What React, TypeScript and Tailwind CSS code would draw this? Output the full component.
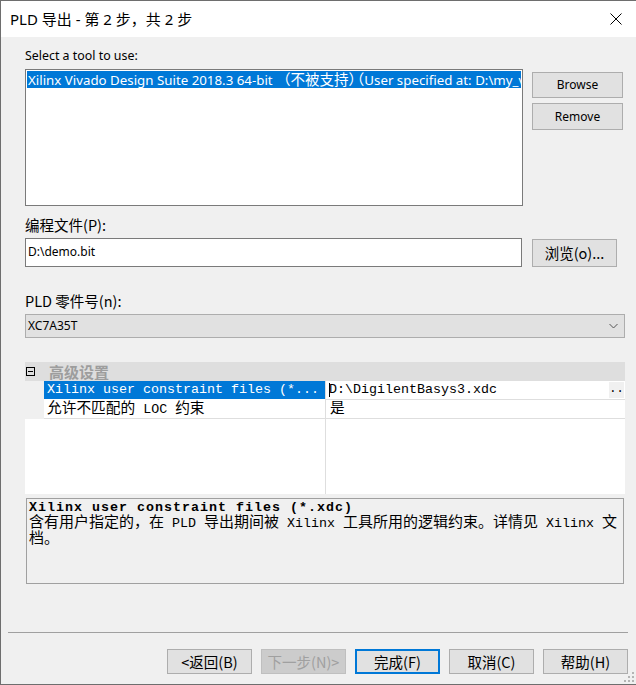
import React from "react";

const CJK_RUN = /([\u2E80-\u9FFF\u3000-\u303F\uFF00-\uFFEF]+)/;

// Renders a string, wrapping runs of CJK glyphs in a span with their own class.
function Runs({ text, cjk }: { text: string; cjk: string }) {
  const parts = text.split(CJK_RUN);
  return (
    <>
      {parts.map((p, i) =>
        i % 2 === 1 ? (
          <span key={i} className={cjk}>
            {p}
          </span>
        ) : (
          <React.Fragment key={i}>{p}</React.Fragment>
        )
      )}
    </>
  );
}

// Labels that contain Chinese are drawn in the larger linked CJK face.
function T({ text }: { text: string }) {
  return <span className="font-['Noto_Sans_CJK_SC',sans-serif] text-[14.5px]">{text}</span>;
}

function Btn({
  children,
  className = "",
}: {
  children: React.ReactNode;
  className?: string;
}) {
  return (
    <div
      className={`flex items-center justify-center border border-[#adadad] bg-[#e1e1e1] text-[12px] leading-[16px] whitespace-pre ${className}`}
    >
      {children}
    </div>
  );
}

function Grip() {
  const dots = [
    [8, 0],
    [4, 4],
    [8, 4],
    [0, 8],
    [4, 8],
    [8, 8],
  ];
  return (
    <svg width="11" height="11" viewBox="0 0 11 11" className="absolute right-[1px] bottom-[1px]">
      {dots.map(([x, y], i) => (
        <rect key={i} x={x} y={y} width="2" height="2" fill="#b4b4b4" />
      ))}
    </svg>
  );
}

export default function App() {
  return (
    <div className="relative w-[636px] h-[685px] box-border border-l border-t border-b border-[#6e6e6e] bg-[#f0f0f0] flex flex-col text-black font-['Noto_Sans','Noto_Sans_CJK_SC',sans-serif] text-[12px] leading-[16px]">
      {/* title bar */}
      <div className="h-[36px] shrink-0 bg-white flex items-center justify-between pl-[9px] pr-[14px]">
        <span className="text-[15px] leading-[20px]">PLD 导出 - 第 2 步，共 2 步</span>
        <svg width="12" height="12" viewBox="0 0 12 12">
          <path d="M0.5 0.5L11.5 11.5M11.5 0.5L0.5 11.5" stroke="#000" strokeWidth="1" />
        </svg>
      </div>

      {/* wizard body */}
      <div className="flex-1 flex flex-col pl-[24px] pr-[11px]">
        <div className="mt-[11px] h-[16px] text-[12.4px]">Select a tool to use:</div>
        <div className="mt-[5px] flex gap-[9px]">
          <div className="w-[498px] h-[137px] border border-[#7a7a7a] bg-white p-[1px] overflow-hidden">
            <div className="h-[17px] bg-[#0078d7] text-white whitespace-pre overflow-hidden pl-[1px] leading-[17px] text-[13.3px]">
              Xilinx Vivado Design Suite 2018.3 64-bit{" "}
              <span className="text-[14.5px]">（不被支持）</span>
              <span className="text-[14.5px] -ml-[6px]">（</span>
              User specified at: D:\my_vivado\Vivado\2018.3\bin\vivado.bat
              <span className="text-[14.5px]">）</span>
            </div>
          </div>
          <div className="flex flex-col gap-[5px] pt-[3px]">
            <Btn className="w-[91px] h-[26px]">Browse</Btn>
            <Btn className="w-[91px] h-[27px]">Remove</Btn>
          </div>
        </div>

        <div className="mt-[11px] h-[16px] leading-[16px]">
          <T text="编程文件(P):" />
        </div>
        <div className="mt-[5px] flex items-start gap-[10px]">
          <div className="w-[497px] h-[29px] border border-[#7a7a7a] bg-white pl-[2px] pb-[2px] flex items-center">
            D:\demo.bit
          </div>
          <Btn className="w-[85px] h-[28px] mt-[1px]">
            <T text="浏览(o)..." />
          </Btn>
        </div>

        <div className="mt-[26px] h-[16px]">
          <T text="PLD 零件号(n):" />
        </div>
        <div className="mt-[5px] h-[24px] border border-[#adadad] bg-[#e1e1e1] flex items-center justify-between pl-[2px] pr-[6px]">
          <span>XC7A35T</span>
          <svg width="9" height="6" viewBox="0 0 9 6">
            <path d="M0.5 1L4.5 5L8.5 1" fill="none" stroke="#555" strokeWidth="1" />
          </svg>
        </div>

        {/* property grid */}
        <div className="mt-[24px] h-[132px] bg-white flex flex-col font-['Liberation_Mono','Noto_Sans_CJK_SC',monospace] text-[13.33px] leading-[18px]">
          <div className="h-[19px] shrink-0 bg-[#dedede] flex items-center">
            <div className="w-[19px] h-[19px] flex items-center pl-[1px]">
              <svg width="9" height="9" viewBox="0 0 9 9">
                <rect x="0.5" y="0.5" width="8" height="8" fill="none" stroke="#000" />
                <path d="M2 4.5H7" stroke="#000" />
              </svg>
            </div>
            <span className="pl-[5px] font-['Noto_Sans_CJK_SC',sans-serif] font-bold text-[15px] leading-[19px] text-[#9d9d9d]">高级设置</span>
          </div>
          <div className="h-[19px] shrink-0 flex">
            <div className="w-[19px] bg-[#f0f0f0]" />
            <div className="w-[281px] h-[18px] bg-[#0078d7] text-white whitespace-pre pl-[3px]">Xilinx user constraint files (*...</div>
            <div className="flex-1 border-l border-b border-[#dedede] flex justify-between">
              <div className="flex items-start pl-[3px] whitespace-pre">
                <span className="mt-[2px] w-[1px] h-[14px] bg-black -mr-[1px]" />
                <span>D:\DigilentBasys3.xdc</span>
              </div>
              <div className="w-[15px] h-[16px] mt-[1px] mr-[1px] bg-[#f0f0f0] text-[12px] leading-[14px] text-center">..</div>
            </div>
          </div>
          <div className="h-[19px] shrink-0 flex">
            <div className="w-[19px] bg-[#f0f0f0]" />
            <div className="w-[281px] border-b border-[#dedede] whitespace-pre pl-[3px]">
              <Runs text="允许不匹配的 LOC 约束" cjk="text-[14.7px]" />
            </div>
            <div className="flex-1 border-l border-b border-[#dedede] whitespace-pre pl-[4px]">
              <Runs text="是" cjk="text-[14.7px]" />
            </div>
          </div>
          <div className="flex-1 flex">
            <div className="w-[300px]" />
            <div className="flex-1 border-l border-[#dedede]" />
          </div>
        </div>

        {/* description pane */}
        <div className="mt-[4px] ml-[1px] w-[598px] h-[86px] border border-[#a0a0a0] bg-[#f0f0f0] px-[2px] pt-[1px] font-['Liberation_Mono','Noto_Sans_CJK_SC',monospace] text-[13.33px] leading-[16px] whitespace-pre">
          <div className="font-bold tracking-[1px]">Xilinx user constraint files (*.xdc)</div>
          <div>
            <Runs text="含有用户指定的，在 PLD 导出期间被 Xilinx 工具所用的逻辑约束。详情见 Xilinx 文" cjk="text-[15px]" />
          </div>
          <div>
            <Runs text="档。" cjk="text-[15px]" />
          </div>
        </div>
      </div>

      {/* footer */}
      <div className="shrink-0 h-[52px] flex flex-col">
        <div className="ml-[7px] mr-[8px] h-[1px] bg-[#a0a0a0]" />
        <div className="mt-[16px] flex justify-end gap-[9px] pr-[8px]">
          <Btn className="w-[85px] h-[25px]">
            <T text="<返回(B)" />
          </Btn>
          <Btn className="w-[85px] h-[25px] !bg-[#cccccc] !border-[#bfbfbf] text-[#a0a0a0]">
            <T text="下一步(N)>" />
          </Btn>
          <Btn className="w-[85px] h-[25px] !border-2 !border-[#0078d7]">
            <T text="完成(F)" />
          </Btn>
          <Btn className="w-[85px] h-[25px]">
            <T text="取消(C)" />
          </Btn>
          <Btn className="w-[85px] h-[25px]">
            <T text="帮助(H)" />
          </Btn>
        </div>
      </div>
      <Grip />
    </div>
  );
}
